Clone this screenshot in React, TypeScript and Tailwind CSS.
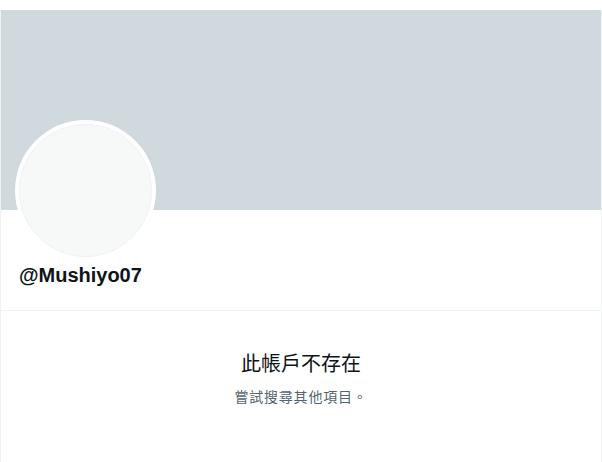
export default function App() {
  return (
    <div
      lang="zh-Hant-TW"
      className="w-[602px] h-[462px] bg-white pt-[10px]"
      style={{ fontFamily: '"Liberation Sans", "Noto Sans CJK TC", sans-serif' }}
    >
      <div className="h-full border-x border-[#eff3f4] flex flex-col">
        <div className="h-[200px] bg-[#cfd9de] shrink-0" />
        <div className="px-[16px] relative">
          <div className="-mt-[90px] ml-[-2px] w-[141px] h-[141px] rounded-full bg-white p-[4px]">
            <div className="w-full h-full rounded-full bg-[#f7f9f9] border border-[#eff3f4]" />
          </div>
          <div className="mt-[2px] ml-[2px] text-[20px] font-bold text-[#0f1419] leading-[24px]">
            @Mushiyo07
          </div>
        </div>
        <div className="mt-[23px] border-t border-[#eff3f4] flex-1 flex flex-col items-center pt-[39px]">
          <div className="text-[20px] text-[#0f1419] leading-[28px]">此帳戶不存在</div>
          <div className="mt-[9px] text-[14px] tracking-[0.8px] text-[#536471] leading-[20px]">嘗試搜尋其他項目。</div>
        </div>
      </div>
    </div>
  );
}
